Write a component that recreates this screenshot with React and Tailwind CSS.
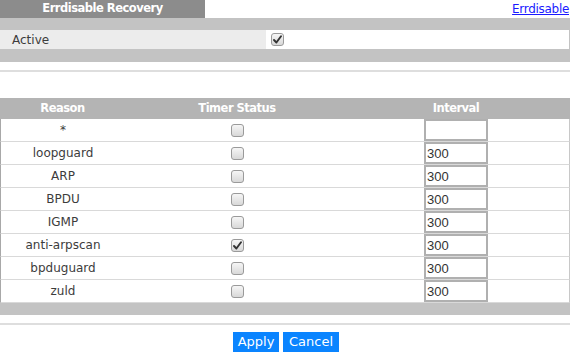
import { useState } from "react";

const reasons = [
  { name: "*", checked: false, interval: "" },
  { name: "loopguard", checked: false, interval: "300" },
  { name: "ARP", checked: false, interval: "300" },
  { name: "BPDU", checked: false, interval: "300" },
  { name: "IGMP", checked: false, interval: "300" },
  { name: "anti-arpscan", checked: true, interval: "300" },
  { name: "bpduguard", checked: false, interval: "300" },
  { name: "zuld", checked: false, interval: "300" },
];

function Check({ checked, onClick }) {
  return (
    <span
      onClick={onClick}
      className="flex w-[13px] h-[13px] items-center justify-center rounded-[3px] border border-[#9a9a9a] bg-gradient-to-b from-[#f6f6f6] to-[#d8d8d8] cursor-pointer"
    >
      {checked && (
        <svg width="9" height="9" viewBox="0 0 9 9">
          <path d="M1 5 L3.4 7.5 L8 1.2" fill="none" stroke="#333" strokeWidth="1.9" strokeLinecap="round" strokeLinejoin="round" />
        </svg>
      )}
    </span>
  );
}

export default function App() {
  const [active, setActive] = useState(true);
  const [rows, setRows] = useState(reasons);

  const toggle = (i) =>
    setRows((prev) => prev.map((r, j) => (j === i ? { ...r, checked: !r.checked } : r)));

  const setInterval = (i, v) =>
    setRows((prev) => prev.map((r, j) => (j === i ? { ...r, interval: v } : r)));

  return (
    <div className="w-[572px] h-[354px] bg-white text-[#3c3c3c] text-[12px] font-['DejaVu_Sans',sans-serif] overflow-hidden">
      {/* Title */}
      <div className="flex h-[18px] justify-between">
        <div className="w-[205px] bg-[#8c8c8c] text-white font-bold text-[11.5px] flex items-center justify-center tracking-[-0.5px]">
          Errdisable Recovery
        </div>
        <a href="#" className="pr-[3px] pt-[2px] text-[#1a1aff] underline leading-[14px] tracking-[-0.3px]">
          Errdisable
        </a>
      </div>

      {/* Active */}
      <div className="w-[570px]">
        <div className="h-[12px] bg-[#c3c3c3]"></div>
        <div className="flex h-[19px]">
          <div className="w-[266px] bg-[#ececec] pl-[12px] flex items-center">Active</div>
          <div className="flex-1 flex items-center pl-[5px] border-r border-[#c3c3c3]">
            <Check checked={active} onClick={() => setActive(!active)} />
          </div>
        </div>
        <div className="h-[13px] bg-[#c3c3c3]"></div>
      </div>

      <div className="mt-[8px] h-[2px] w-[570px] bg-[#dedede]"></div>

      {/* Table */}
      <div className="mt-[26px] w-[570px]">
        <div className="flex h-[21px] bg-[#b4b4b4] text-white font-bold text-[11.5px] tracking-[-0.5px] items-center">
          <div className="w-[125px] text-center">Reason</div>
          <div className="w-[224px] text-center">Timer Status</div>
          <div className="w-[214px] text-center">Interval</div>
        </div>
        {rows.map((r, i) => (
          <div key={r.name} className="flex h-[23px] items-center border-l border-r border-b border-l-[#a8a8a8] border-r-[#c8c8c8] border-b-[#d9d9d9]">
            <div className="w-[124px] text-center">{r.name}</div>
            <div className="w-[224px] flex justify-center">
              <Check checked={r.checked} onClick={() => toggle(i)} />
            </div>
            <div className="w-[214px] flex justify-center">
              <input
                value={r.interval}
                onChange={(e) => setInterval(i, e.target.value)}
                className="w-[64px] h-[22px] border-2 border-[#b0b0b0] px-[1px] text-[13px] text-[#333] font-['Liberation_Sans',sans-serif] outline-none"
              />
            </div>
          </div>
        ))}
        <div className="h-[12px] bg-[#c3c3c3]"></div>
      </div>

      <div className="mt-[8px] h-[2px] w-[570px] bg-[#dedede]"></div>

      {/* Buttons */}
      <div className="mt-[7px] flex justify-center gap-[4px]">
        <button className="w-[46px] h-[20px] bg-[#0a84ff] text-white text-[13px]">Apply</button>
        <button className="w-[56px] h-[20px] bg-[#0a84ff] text-white text-[13px]">Cancel</button>
      </div>
    </div>
  );
}
